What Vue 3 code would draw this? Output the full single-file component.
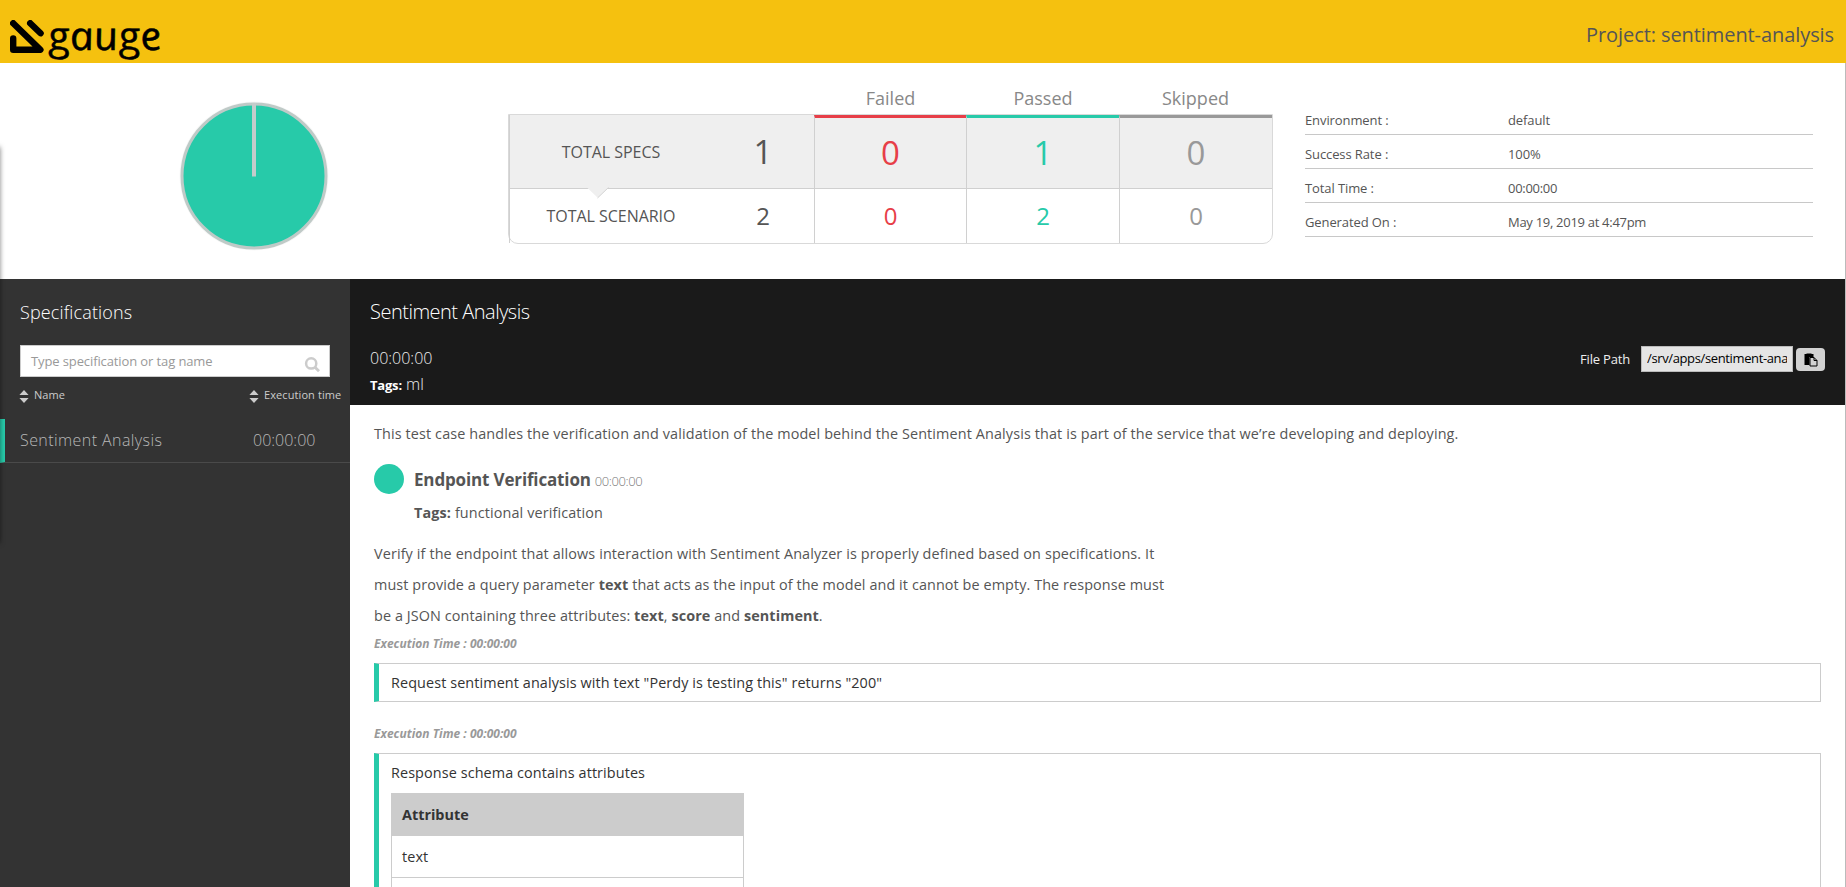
<script setup>
const columns = [
  { name: 'Failed', tone: 'failed', specs: 0, scenarios: 0 },
  { name: 'Passed', tone: 'passed', specs: 1, scenarios: 2 },
  { name: 'Skipped', tone: 'skipped', specs: 0, scenarios: 0 },
]
const facts = [
  { label: 'Environment :', value: 'default' },
  { label: 'Success Rate :', value: '100%' },
  { label: 'Total Time :', value: '00:00:00', digits: true },
  { label: 'Generated On :', value: 'May 19, 2019 at 4:47pm', digits: true },
]
</script>

<template>
  <div class="page">
    <header class="top">
      <div class="logo">
        <svg class="mark" width="34" height="34" viewBox="0 0 34 34">
          <g fill="none" stroke="#000" stroke-width="6.4" stroke-linecap="round" stroke-linejoin="round">
            <path d="M3.2 3.2 L30.4 29.8 H3.2 V18.4" />
            <path d="M20.2 3.2 L30.6 13.2" />
          </g>
        </svg>
        <span class="word">gauge</span>
      </div>
      <div class="project">Project: sentiment-analysis</div>
    </header>

    <section class="summary">
      <svg class="pie" width="150" height="150" viewBox="0 0 150 150">
        <circle cx="75" cy="75" r="74.5" fill="#f8f8f8" />
        <circle cx="75" cy="75" r="72" fill="#27caa9" stroke="#bfcac7" stroke-width="3" />
        <path d="M75 2 V75.5" stroke="#c4cccb" stroke-width="4" />
      </svg>

      <div class="totals">
        <div class="heads">
          <span></span>
          <span v-for="c in columns" :key="c.name">{{ c.name }}</span>
        </div>
        <div class="grid">
          <div class="row specs">
            <div class="lead"><span class="label">TOTAL SPECS</span><span class="num">1</span></div>
            <div v-for="c in columns" :key="c.name" class="cell" :class="c.tone">{{ c.specs }}</div>
            <svg class="notch" width="24" height="12" viewBox="0 0 24 12">
              <path d="M0.5 0 H23 L11.7 10.8 Z" fill="#efefef" />
              <path d="M11.5 11 L22.5 0.5" stroke="#d4d4d4" fill="none" />
            </svg>
          </div>
          <div class="row scenarios">
            <div class="lead"><span class="label">TOTAL SCENARIO</span><span class="num">2</span></div>
            <div v-for="c in columns" :key="c.name" class="cell" :class="c.tone">{{ c.scenarios }}</div>
          </div>
        </div>
      </div>

      <dl class="facts">
        <div v-for="f in facts" :key="f.label" class="fact">
          <dt>{{ f.label }}</dt>
          <dd :class="{ digits: f.digits }">{{ f.value }}</dd>
        </div>
      </dl>
    </section>

    <div class="body">
      <aside class="side">
        <h3>Specifications</h3>
        <div class="search">
          <span>Type specification or tag name</span>
          <svg width="16" height="16" viewBox="0 0 16 16" fill="none" stroke="#ccc">
            <circle cx="7.2" cy="6.4" r="5.1" stroke-width="2.5" />
            <path d="M11 10.2 L15 14.2" stroke-width="2.8" />
          </svg>
        </div>
        <div class="sorts">
          <span class="sort name"><svg width="10" height="13" viewBox="0 0 10 13"><path d="M5 0 L9.6 5 H0.4 Z M5 13 L9.6 8 H0.4 Z" fill="#ccc" /></svg><span>Name</span></span>
          <span class="sort"><svg width="10" height="13" viewBox="0 0 10 13"><path d="M5 0 L9.6 5 H0.4 Z M5 13 L9.6 8 H0.4 Z" fill="#ccc" /></svg><span>Execution time</span></span>
        </div>
        <div class="spec"><span class="spec-name">Sentiment Analysis</span><span>00:00:00</span></div>
      </aside>

      <main class="main">
        <div class="head">
          <div class="info">
            <h2>Sentiment Analysis</h2>
            <div class="time">00:00:00</div>
            <div class="tags"><b>Tags:</b> <span>ml</span></div>
          </div>
          <div class="path">
            <span class="cap">File Path</span>
            <span class="field"><span class="clip">/srv/apps/sentiment-analysis</span></span>
            <span class="copy">
              <svg width="14" height="14" viewBox="0 0 14 14">
                <path d="M0.5 1 H2.5 V0.5 H7.5 V1 H9.5 V4 H5.5 V12 H0.5 Z" fill="#000" />
                <path d="M6 4.5 H10 L13 7.5 V13 H6 Z" fill="#d2d2d2" stroke="#000" />
                <path d="M10 4.5 V7.5 H13" fill="none" stroke="#000" />
              </svg>
            </span>
          </div>
        </div>

        <div class="content">
          <p class="intro">This test case handles the verification and validation of the model behind the Sentiment Analysis that is part of the service that we’re developing and deploying.</p>
          <div class="scenario">
            <i class="dot"></i>
            <div>
              <div class="title"><b>Endpoint Verification</b><span>00:00:00</span></div>
              <div class="stags"><b>Tags:</b> <span>functional verification</span></div>
            </div>
          </div>
          <p class="desc">
            Verify if the endpoint that allows interaction with Sentiment Analyzer is properly defined based on specifications. It<br />
            <span class="snug">must provide a query parameter <b>text</b> that acts as the input of the model and it cannot be empty. The response must</span><br />
            <span class="snug">be a JSON containing three attributes: <b>text</b>, <b>score</b> and <b>sentiment</b>.</span>
          </p>
          <div class="exec">Execution Time : 00:00:00</div>
          <div class="step">Request sentiment analysis with text "Perdy is testing this" returns "200"</div>
          <div class="exec">Execution Time : 00:00:00</div>
          <div class="step tall">
            Response schema contains attributes
            <div class="attrs">
              <div class="th">Attribute</div>
              <div class="td">text</div>
              <div class="td"></div>
            </div>
          </div>
        </div>
      </main>
    </div>
    <div class="edge"></div>
    <div class="rim"></div>
  </div>
</template>

<style>
body { margin: 0; }
</style>

<style scoped>
* { box-sizing: border-box; }
.page { position: relative; width: 1846px; height: 887px; overflow: hidden; background: #fff; color: #555; font-family: "Open Sans", sans-serif; font-size: 14.4px; display: flex; flex-direction: column; }
h2, h3, p, dl, dd { margin: 0; }

.top { height: 63px; flex: none; background: #f5c10f; display: flex; justify-content: space-between; padding: 0 12px 0 10px; }
.logo { display: flex; padding-top: 20px; }
.mark { display: block; }
.word { font-family: "Open Sans", sans-serif; font-style: italic; font-size: 40px; line-height: 40px; margin-left: 6px; margin-top: -5px; color: #000; -webkit-text-stroke: 0.5px #000; transform: scale(1.06, 0.99) skewX(11deg); transform-origin: 0 35px; }
.project { font-size: 20px; line-height: 28px; padding-top: 21px; letter-spacing: -0.08px; }

.summary { height: 216px; flex: none; display: flex; padding-left: 179px; }
.pie { margin-top: 38px; display: block; flex: none; }
.totals { width: 765px; margin-left: 179px; padding-top: 20px; }
.heads { display: grid; grid-template-columns: 306px 153px 152px 153px; height: 31px; line-height: 31px; font-size: 18px; color: #888; text-align: center; }
.grid { height: 130px; border: 1px solid #d9d9d9; border-radius: 0 0 10px 10px; }
.row { position: relative; display: grid; grid-template-columns: 305px 152px 153px 153px; }
.row::before { content: ""; position: absolute; left: 0; top: 0; bottom: 0; width: 1px; background: #d0d0d0; }
.specs { height: 74px; background: #efefef; border-bottom: 1px solid #d0d0d0; }
.scenarios { height: 54px; }
.lead { display: grid; grid-template-columns: 204px 100px; align-items: center; text-align: center; }
.label { font-size: 16px; letter-spacing: -0.04px; }
.num, .cell { font-size: 24px; padding-bottom: 2px; }
.specs .num, .specs .cell { font-size: 33px; }
.specs .num { padding-bottom: 0; }
.cell { display: flex; align-items: center; justify-content: center; border-left: 1px solid #d0d0d0; }
.specs .cell { border-top: 3px solid; border-left: 1px solid #d0d0d0; }
.failed { color: #e73e48; }
.passed { color: #27caa9; }
.skipped { color: #999; }
.specs .failed { border-top-color: #e73e48; }
.specs .passed { border-top-color: #27caa9; }
.specs .skipped { border-top-color: #999; }
.notch { position: absolute; left: 77px; top: 72px; }
.facts { width: 508px; margin-left: 32px; padding-top: 38px; font-size: 13px; letter-spacing: -0.1px; }
.fact { display: flex; height: 34px; border-bottom: 1px solid #c8c8c8; line-height: 18px; padding-top: 10px; }
.fact dt { width: 203px; }
.digits { letter-spacing: -0.29px; }

.body { flex: 1; display: flex; min-height: 0; width: 1845px; }
.side { width: 350px; background: #333; color: #ccc; flex: none; }
.side h3 { font-size: 18px; font-weight: 300; line-height: 26px; padding: 20px 0 0 20px; color: #fff; letter-spacing: 0.15px; }
.search { margin: 20px 20px 0; height: 32px; background: #fff; border: 1px solid #ccc; color: #999; font-size: 13px; letter-spacing: -0.11px; line-height: 30px; display: flex; justify-content: space-between; padding: 0 9px 0 10px; }
.search svg { margin-top: 11px; }
.sorts { display: flex; font-size: 11px; line-height: 16px; padding-left: 19px; margin-top: 10px; height: 32px; letter-spacing: 0.09px; }
.sort { display: flex; gap: 5px; }
.sort svg { margin-top: 3px; }
.sort.name { width: 230px; }
.spec { height: 44px; border-left: 5px solid #27caa9; border-bottom: 1px solid #4a4a4a; padding-left: 15px; display: flex; font-size: 16px; font-weight: 300; line-height: 43px; color: #b8b8b8; }
.spec-name { width: 233px; letter-spacing: 0.42px; }

.main { flex: 1; min-width: 0; }
.head { height: 126px; background: #1a1a1a; color: #eee; display: flex; justify-content: space-between; padding: 0 20px; }
.head h2 { font-size: 20px; font-weight: 300; line-height: 28px; padding-top: 19px; color: #fff; letter-spacing: -0.5px; }
.head .time { font-size: 16px; font-weight: 300; line-height: 24px; margin-top: 20px; }
.tags { font-size: 16px; font-weight: 300; line-height: 24px; margin-top: 2px; }
.tags b { font-size: 13px; font-weight: 700; color: #fff; letter-spacing: -0.2px; }
.path { display: flex; padding-top: 67px; font-size: 13px; }
.cap { line-height: 26px; margin-right: 11px; letter-spacing: -0.18px; }
.field { width: 152px; height: 26px; background: #e5e5e5; border: 1px solid #bbb; color: #000; padding: 0 5px; line-height: 23px; letter-spacing: -0.37px; }
.clip { display: block; overflow: hidden; white-space: nowrap; }
.copy { width: 29px; height: 23px; margin: 2px 0 0 3px; border-radius: 4px; background: #d2d2d2; display: flex; align-items: center; justify-content: center; }

.content { padding: 17px 24px 0; letter-spacing: 0.12px; }
.intro { line-height: 24px; white-space: nowrap; }
.scenario { display: flex; margin-top: 18px; }
.dot { width: 30px; height: 30px; border-radius: 50%; background: #27caa9; margin-right: 10px; }
.title { font-size: 17px; line-height: 24px; height: 28px; padding-top: 4px; white-space: nowrap; letter-spacing: -0.15px; }
.title span { font-size: 13px; font-weight: 300; color: #777; margin-left: 4px; letter-spacing: -0.4px; }
.stags { line-height: 20px; margin-top: 11px; }
.desc { line-height: 31px; margin-top: 15px; white-space: nowrap; }
.snug { letter-spacing: 0.09px; }
.exec { font-size: 12px; letter-spacing: 0.02px; font-weight: 700; font-style: italic; color: #999; line-height: 18px; margin-top: 4px; }
.step { border: 1px solid #ccc; border-left: 5px solid #27caa9; height: 39px; margin: 10px 0 23px; padding: 8px 12px; line-height: 21px; color: #333; letter-spacing: 0.1px; }
.step.tall { height: 260px; }
.attrs { width: 353px; margin-top: 10px; border: 1px solid #ccc; }
.th { height: 42px; line-height: 41px; background: #ccc; font-weight: 700; padding-left: 10px; letter-spacing: 0; }
.td { height: 42px; line-height: 41px; border-bottom: 1px solid #ccc; padding-left: 10px; }
.edge { position: absolute; left: 1845px; top: 63px; width: 1px; height: 824px; background: #bbb; }
.rim { position: absolute; left: -10px; top: 147px; width: 10px; height: 396px; box-shadow: 0 0 5px rgba(0, 0, 0, 0.5); }
</style>
